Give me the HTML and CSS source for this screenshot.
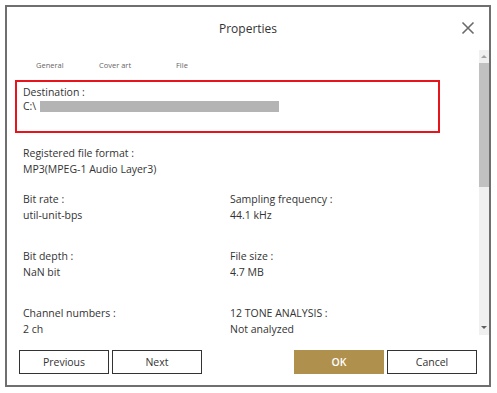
FILE: index.html
```html
<!DOCTYPE html>
<html>
	<head>
		<meta charset="UTF-8">
		<title>Properties</title>
		<link rel="stylesheet" href="styles.css">
	</head>
	<body>
		<div class="dialog">
			<div class="header">
				<span class="title">Properties</span>
				<a class="close" href="javascript:void(0);">
					<svg width="14" height="14" viewBox="0 0 14 14">
						<path d="M1.5 1.5L12.5 12.5M12.5 1.5L1.5 12.5" stroke="#6a6a6a" stroke-width="1.6" fill="none"/>
					</svg>
				</a>
			</div>
			<div class="body">
				<div class="content">
					<ul class="tabs">
						<li class="tab-general">General</li>
						<li class="tab-cover">Cover art</li>
						<li>File</li>
					</ul>
					<div class="destination">
						<p>Destination :</p>
						<p class="path">C:\<span class="masked"></span></p>
					</div>
					<div class="field format">
						<p>Registered file format :</p>
						<p>MP3(MPEG-1 Audio Layer3)</p>
					</div>
					<div class="grid">
						<div class="field">
							<p>Bit rate :</p>
							<p>util-unit-bps</p>
						</div>
						<div class="field">
							<p>Sampling frequency :</p>
							<p>44.1 kHz</p>
						</div>
						<div class="field">
							<p>Bit depth :</p>
							<p>NaN bit</p>
						</div>
						<div class="field">
							<p>File size :</p>
							<p>4.7 MB</p>
						</div>
						<div class="field">
							<p>Channel numbers :</p>
							<p>2 ch</p>
						</div>
						<div class="field">
							<p>12 TONE ANALYSIS :</p>
							<p>Not analyzed</p>
						</div>
					</div>
				</div>
				<div class="scrollbar">
					<span class="arrow up"></span>
					<span class="thumb"></span>
					<span class="track"></span>
					<span class="arrow down"></span>
				</div>
			</div>
			<div class="footer">
				<input class="btn" type="button" value="Previous">
				<input class="btn" type="button" value="Next">
				<span class="spacer"></span>
				<input class="btn ok" type="button" value="OK">
				<input class="btn" type="button" value="Cancel">
			</div>
		</div>
	</body>
</html>
```

FILE: styles.css
```css
* {
	margin: 0;
	padding: 0;
	box-sizing: border-box;
}
body {
	font-family: "Open Sans", "Noto Sans", sans-serif;
	font-size: 10.5px;
	color: #333;
	background-color: white;
}
.dialog {
	margin: 5px;
	width: 486px;
	height: 382px;
	border: 2px solid #6f6f6f;
	display: flex;
	flex-direction: column;
}
.header {
	height: 43px;
	display: flex;
	align-items: center;
	justify-content: center;
	position: relative;
}
.title {
	font-size: 12px;
	color: #333;
}
.close {
	position: absolute;
	right: 14px;
	top: 14px;
	line-height: 0;
}
.body {
	height: 287px;
	display: flex;
	overflow: hidden;
}
.content {
	flex: 1;
	padding-left: 8px;
}
.tabs {
	list-style: none;
	height: 30px;
	display: flex;
	align-items: center;
	padding-left: 21px;
	font-size: 7.5px;
	color: #666;
}
.tabs li.tab-general {
	width: 63px;
}
.tabs li.tab-cover {
	width: 77px;
}
.destination {
	width: 425px;
	height: 53px;
	border: 2px solid #e8141c;
	padding: 3px 6px 0;
	line-height: 14px;
}
.path {
	display: flex;
	align-items: center;
}
.masked {
	display: inline-block;
	width: 239px;
	height: 11px;
	margin-left: 4px;
	background-color: #b4b4b4;
}
.field {
	line-height: 16px;
	padding-left: 8px;
}
.format {
	margin-top: 12px;
}
.grid {
	display: grid;
	grid-template-columns: 215px 1fr;
	row-gap: 25px;
	margin-top: 14px;
}
.grid .field:nth-child(even) {
	padding-left: 0;
}
.scrollbar {
	width: 10px;
	height: 285px;
	background-color: #f0f0f0;
	display: flex;
	flex-direction: column;
	align-items: center;
}
.arrow {
	width: 0;
	height: 0;
	border-left: 3px solid transparent;
	border-right: 3px solid transparent;
}
.arrow.up {
	border-bottom: 3px solid #a3a3a3;
	margin: 5px 0 5px;
}
.arrow.down {
	border-top: 3px solid #606060;
	margin: 4px 0 6px;
}
.thumb {
	width: 10px;
	height: 124px;
	background-color: #c1c1c1;
}
.track {
	flex: 1;
}
.footer {
	flex: 1;
	display: flex;
	align-items: center;
	gap: 3px;
	padding: 2px 12px 0 12px;
}
.spacer {
	flex: 1;
}
.btn {
	width: 90px;
	height: 24px;
	border: 1px solid #333;
	background-color: white;
	font-family: "Open Sans", "Noto Sans", sans-serif;
	font-size: 10.5px;
	color: #333;
}
.btn.ok {
	border: none;
	background-color: #b0904d;
	color: white;
	font-weight: 600;
}
```
